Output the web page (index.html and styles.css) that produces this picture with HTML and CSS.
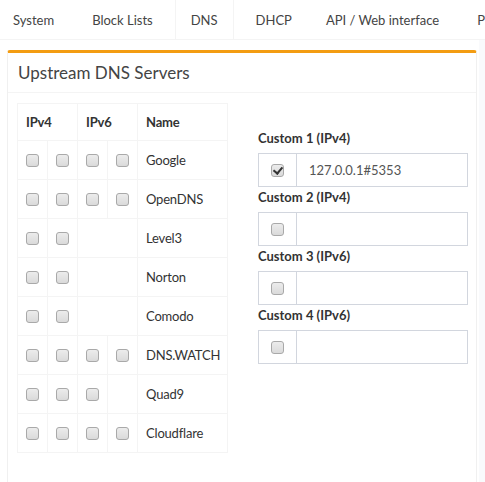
FILE: index.html
```html
<!DOCTYPE html>
<html lang="en">
<head>
<meta charset="UTF-8" />
<title>Pi-hole - Settings</title>
<link rel="stylesheet" href="styles.css">
</head>
<body>
<div class="nav-tabs-custom">
  <ul class="nav-tabs">
    <li><a href="#">System</a></li>
    <li><a href="#">Block Lists</a></li>
    <li class="active"><a href="#">DNS</a></li>
    <li><a href="#">DHCP</a></li>
    <li><a href="#">API / Web interface</a></li>
    <li><a href="#">Privacy</a></li>
  </ul>

  <div class="tab-content">
    <div class="box box-warning">
      <div class="box-header">
        <h3 class="box-title">Upstream DNS Servers</h3>
      </div>
      <div class="box-body">
        <table class="table-bordered">
          <colgroup>
            <col class="cb"><col class="cb"><col class="cb"><col class="cb"><col class="name">
          </colgroup>
          <tr>
            <th colspan="2">IPv4</th>
            <th colspan="2">IPv6</th>
            <th>Name</th>
          </tr>
          <tr>
            <td><input type="checkbox"></td><td><input type="checkbox"></td>
            <td><input type="checkbox"></td><td><input type="checkbox"></td>
            <td>Google</td>
          </tr>
          <tr>
            <td><input type="checkbox"></td><td><input type="checkbox"></td>
            <td><input type="checkbox"></td><td><input type="checkbox"></td>
            <td>OpenDNS</td>
          </tr>
          <tr>
            <td><input type="checkbox"></td><td><input type="checkbox"></td>
            <td colspan="2"></td>
            <td>Level3</td>
          </tr>
          <tr>
            <td><input type="checkbox"></td><td><input type="checkbox"></td>
            <td colspan="2"></td>
            <td>Norton</td>
          </tr>
          <tr>
            <td><input type="checkbox"></td><td><input type="checkbox"></td>
            <td colspan="2"></td>
            <td>Comodo</td>
          </tr>
          <tr>
            <td><input type="checkbox"></td><td><input type="checkbox"></td>
            <td><input type="checkbox"></td><td><input type="checkbox"></td>
            <td>DNS.WATCH</td>
          </tr>
          <tr>
            <td><input type="checkbox"></td><td><input type="checkbox"></td>
            <td><input type="checkbox"></td><td></td>
            <td>Quad9</td>
          </tr>
          <tr>
            <td><input type="checkbox"></td><td><input type="checkbox"></td>
            <td><input type="checkbox"></td><td><input type="checkbox"></td>
            <td>Cloudflare</td>
          </tr>
        </table>

        <div class="custom-servers">
          <label>Custom 1 (IPv4)</label>
          <div class="input-group">
            <span class="addon"><input type="checkbox" checked></span>
            <input type="text" class="form-control" value="127.0.0.1#5353">
          </div>
          <label>Custom 2 (IPv4)</label>
          <div class="input-group">
            <span class="addon"><input type="checkbox"></span>
            <input type="text" class="form-control">
          </div>
          <label>Custom 3 (IPv6)</label>
          <div class="input-group">
            <span class="addon"><input type="checkbox"></span>
            <input type="text" class="form-control">
          </div>
          <label>Custom 4 (IPv6)</label>
          <div class="input-group">
            <span class="addon"><input type="checkbox"></span>
            <input type="text" class="form-control">
          </div>
        </div>
      </div>
    </div>
  </div>
</div>
</body>
</html>
```

FILE: styles.css
```css
body {
  margin: 0; font-family: Lato, 'Liberation Sans', sans-serif; font-size: 13px; color: #333; background: #f9fafc; overflow: hidden;
}
.nav-tabs-custom {
  height: 482px;
}
.nav-tabs {
  list-style: none; margin: 0; padding: 0; display: flex; height: 39px; background: #fff; border-bottom: 1px solid #f4f4f4; white-space: nowrap; overflow: hidden;
}
.nav-tabs li {
  margin-right: 6px; border-left: 1px solid transparent; border-right: 1px solid transparent;
}
.nav-tabs li:first-child {
  margin-left: -3px;
}
.nav-tabs li:nth-child(5) {
  margin-left: -4px;
}
.nav-tabs li a {
  display: block; padding: 0 15px; line-height: 40px; color: #444; text-decoration: none;
}
.nav-tabs li.active {
  background: #fff; border-color: #f4f4f4; height: 40px;
}
.tab-content {
  width: 470px; height: 442px; padding: 10px 2px 0 7px; background: #fff;
}
.box {
  border: 1px solid #f0f0f0; border-top: 3px solid #f39c12; border-radius: 3px 3px 0 0; background: #fff; height: 440px;
}
.box-header {
  padding: 0 10px; height: 39px; border-bottom: 1px solid #f4f4f4; display: flex; align-items: center;
}
.box-title {
  margin: 0; font-size: 17px; font-weight: 400; color: #444;
}
.box-body {
  padding: 10px 9px; display: flex; gap: 30px;
}
.table-bordered {
  border-collapse: collapse; table-layout: fixed; width: 210px; flex: none;
}
.table-bordered col.cb {
  width: 30px;
}
.table-bordered col.name {
  width: 90px;
}
.table-bordered th,
.table-bordered td {
  border: 1px solid #f4f4f4; padding: 8px; text-align: left; vertical-align: middle; white-space: nowrap; letter-spacing: -0.2px;
}
.table-bordered th {
  height: 20px; font-weight: 700;
}
.table-bordered td {
  height: 22px;
}
input[type=checkbox] {
  appearance: none; -webkit-appearance: none; margin: 0; display: block; width: 13px; height: 13px; box-sizing: border-box;
  border: 1px solid #a9a9a9; border-radius: 3px; background: linear-gradient(#ececec, #dadada); position: relative;
}
input[type=checkbox]:checked::after {
  content: ''; position: absolute; left: 3px; top: 0; width: 4px; height: 7px; border: solid #333; border-width: 0 2px 2px 0; transform: rotate(40deg);
}
.custom-servers {
  width: 210px; padding-top: 25px;
}
.custom-servers label {
  display: block; font-weight: 700; line-height: 20px; margin-bottom: 5px; color: #333;
}
.input-group {
  display: flex; height: 34px; box-sizing: border-box; border: 1px solid #d2d6de;
}
.addon {
  width: 37px; flex: none; border-right: 1px solid #d2d6de; display: flex; align-items: center; justify-content: center;
}
.form-control {
  flex: 1; min-width: 0; border: none; padding: 0 12px; font-family: inherit; font-size: 13px; color: #555; outline: none;
}
```
